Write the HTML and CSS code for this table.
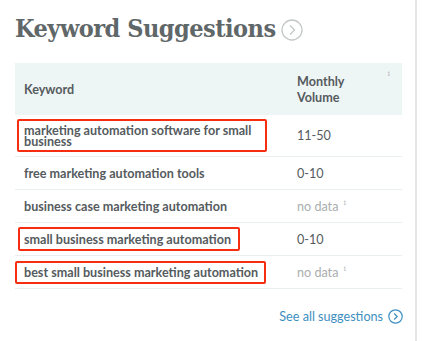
FILE: index.html
```html
<!DOCTYPE html>
<html>
<head>
<meta charset="utf-8">
<link rel="stylesheet" href="styles.css">
</head>
<body>
<div class="page">
  <h2 class="title"><span>Keyword Suggestions</span>
    <svg class="title-icon" width="22" height="22" viewBox="0 0 22 22"><circle cx="11" cy="11" r="10" fill="none" stroke="#c4c8c8" stroke-width="1.3"/><path d="M9 6.5 L13.5 11 L9 15.5" fill="none" stroke="#c4c8c8" stroke-width="1.3"/></svg>
  </h2>
  <div class="table">
    <div class="row head">
      <div class="c1">Keyword</div>
      <div class="c2">Monthly<br>Volume<span class="hi">i</span></div>
    </div>
    <div class="row two">
      <div class="c1"><span class="hl hl1">marketing automation software for small business</span></div>
      <div class="c2">11-50</div>
    </div>
    <div class="row">
      <div class="c1">free marketing automation tools</div>
      <div class="c2">0-10</div>
    </div>
    <div class="row">
      <div class="c1">business case marketing automation</div>
      <div class="c2 nd">no data<sup class="si">i</sup></div>
    </div>
    <div class="row">
      <div class="c1"><span class="hl hl2">small business marketing automation</span></div>
      <div class="c2">0-10</div>
    </div>
    <div class="row">
      <div class="c1"><span class="hl hl3">best small business marketing automation</span></div>
      <div class="c2 nd">no data<sup class="si">i</sup></div>
    </div>
  </div>
  <div class="more">
    <span class="more-link">See all suggestions</span>
    <svg width="15" height="15" viewBox="0 0 15 15"><circle cx="7.5" cy="7.5" r="6.7" fill="none" stroke="#3d8fc0" stroke-width="1.2"/><path d="M6.2 4.5 L9.2 7.5 L6.2 10.5" fill="none" stroke="#3d8fc0" stroke-width="1.2"/></svg>
  </div>
</div>
</body>
</html>
```

FILE: styles.css
```css
html, body { margin: 0; padding: 0; background: #fff; }
.page {
  width: 417px;
  height: 341px;
  border-right: 2px solid #e4e6e6;
  padding-left: 15px;
  box-sizing: border-box;
  font-family: Lato, "Open Sans", sans-serif;
  color: #555b5e;
}
.title {
  margin: 0;
  padding-top: 14px;
  height: 63px;
  box-sizing: border-box;
  font-family: "DejaVu Serif", serif;
  font-stretch: condensed;
  font-weight: bold;
  font-size: 25px;
  line-height: 30px;
  color: #5f6769;
  display: flex;
  align-items: flex-start;
  gap: 5px;
  letter-spacing: -0.5px;
}
.title-icon { flex: none; margin-top: 5px; }
.table { width: 387px; }
.row {
  display: flex;
  border-bottom: 1px solid #e9efef;
  font-size: 12.6px;
  line-height: 13px;
}
.row .c1 {
  width: 273px;
  box-sizing: border-box;
  padding: 10px 9px 9px 9px;
  font-weight: bold;
}
.row .c2 {
  flex: 1;
  padding: 10px 9px 9px 9px;
  position: relative;
}
.row.head {
  background: #eef5f5;
  border-bottom: none;
  height: 52px;
  align-items: center;
}
.row.head .c1, .row.head .c2 { font-weight: bold; padding-top: 0; padding-bottom: 0; }
.row.head .c2 { line-height: 16px; padding-top: 2px; }
.hi {
  position: absolute;
  right: 12px;
  top: -6px;
  font-family: "DejaVu Serif", serif;
  font-size: 8px;
  color: #b8bcbc;
  font-weight: normal;
}
.row.two .c1 { line-height: 11px; }
.row.two .c2 { align-self: center; padding-top: 0; padding-bottom: 0; }
.nd { color: #a9aeaf; }
.si {
  font-family: "DejaVu Serif", serif;
  font-size: 8px;
  color: #b8bcbc;
  margin-left: 5px;
  vertical-align: 6px;
  line-height: 0;
}
.hl {
  display: inline-block;
  position: relative;
}
.hl::after {
  content: "";
  position: absolute;
  border: 2px solid #f72d12;
  border-radius: 2px;
}
.hl1 { display: block; width: fit-content; max-width: 232px; }
.hl1::after { left: -7px; right: -11px; top: -6px; bottom: -5px; }
.hl2::after { left: -6px; right: -9px; top: -6px; bottom: -5px; }
.hl3::after { left: -9px; right: -8px; top: -5px; bottom: -5px; }
.more {
  display: flex;
  justify-content: flex-end;
  align-items: center;
  width: 388px;
  gap: 5px;
  margin-top: 20px;
  font-size: 12.6px;
  color: #3d8fc0;
}
```
